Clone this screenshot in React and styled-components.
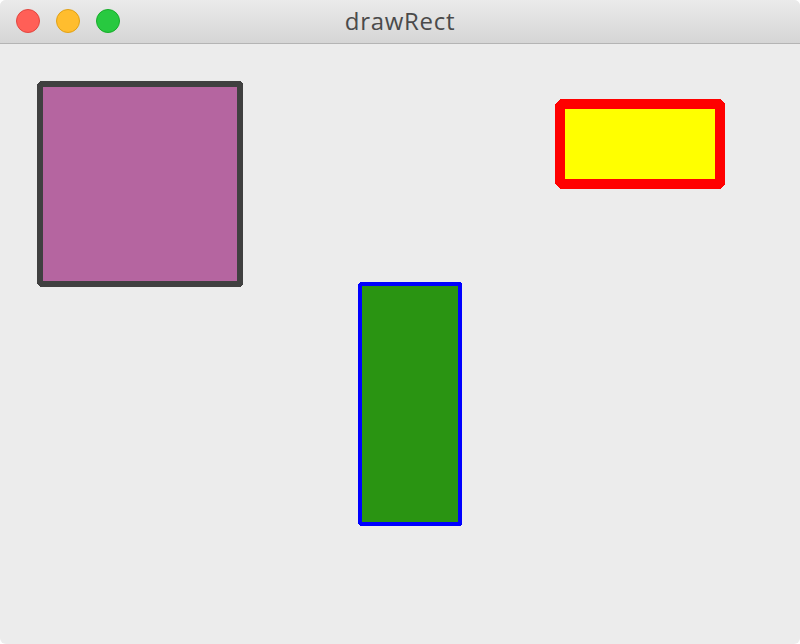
import React from "react";
import styled, { createGlobalStyle } from "styled-components";

const GlobalStyle = createGlobalStyle`
  html, body {
    margin: 0;
    padding: 0;
    background: #ffffff;
  }
  #root {
    height: 644px;
  }
`;

const Window = styled.div`
  box-sizing: border-box;
  width: 800px;
  height: 644px;
  display: flex;
  flex-direction: column;
  background-color: #ececec;
  border-radius: 6px;
  overflow: hidden;
`;

const TitleBar = styled.div`
  position: relative;
  box-sizing: border-box;
  height: 44px;
  flex: 0 0 44px;
  display: flex;
  align-items: center;
  justify-content: center;
  background: linear-gradient(to bottom, #ebebeb, #d5d5d5);
  border-bottom: 1px solid #b4b4b4;
`;

const Lights = styled.div`
  position: absolute;
  left: 16px;
  top: 9px;
  display: flex;
  gap: 16px;
`;

const Light = styled.span`
  box-sizing: border-box;
  width: 24px;
  height: 24px;
  border-radius: 50%;
  background-color: ${(props) => props.color};
  border: 1px solid ${(props) => props.edge};
`;

const Title = styled.div`
  font-family: "Open Sans", "Liberation Sans", sans-serif;
  font-size: 24px;
  letter-spacing: 0.7px;
  color: #4a4a4a;
  line-height: 1;
  margin-top: -1px;
`;

const Canvas = styled.div`
  flex: 1;
  display: flex;
`;

const shapes = [
  { x: 40, y: 40, w: 200, h: 200, fill: "#b565a0", stroke: "#404040", sw: 6 },
  { x: 560, y: 60, w: 160, h: 80, fill: "#ffff00", stroke: "#ff0000", sw: 10 },
  { x: 360, y: 240, w: 100, h: 240, fill: "#2a9412", stroke: "#0000ff", sw: 4 },
];

function App() {
  return (
    <>
      <GlobalStyle />
      <Window>
        <TitleBar>
          <Lights>
            <Light color="#ff5f57" edge="#e2463f" />
            <Light color="#ffbd2e" edge="#e1a116" />
            <Light color="#28c940" edge="#17ad2a" />
          </Lights>
          <Title>drawRect</Title>
        </TitleBar>
        <Canvas>
          <svg width="800" height="600" viewBox="0 0 800 600">
            {shapes.map((s, i) => (
              <rect
                key={i}
                x={s.x}
                y={s.y}
                width={s.w}
                height={s.h}
                fill={s.fill}
                stroke={s.stroke}
                strokeWidth={s.sw}
                strokeLinejoin="bevel"
                shapeRendering="crispEdges"
              />
            ))}
          </svg>
        </Canvas>
      </Window>
    </>
  );
}

export default App;
